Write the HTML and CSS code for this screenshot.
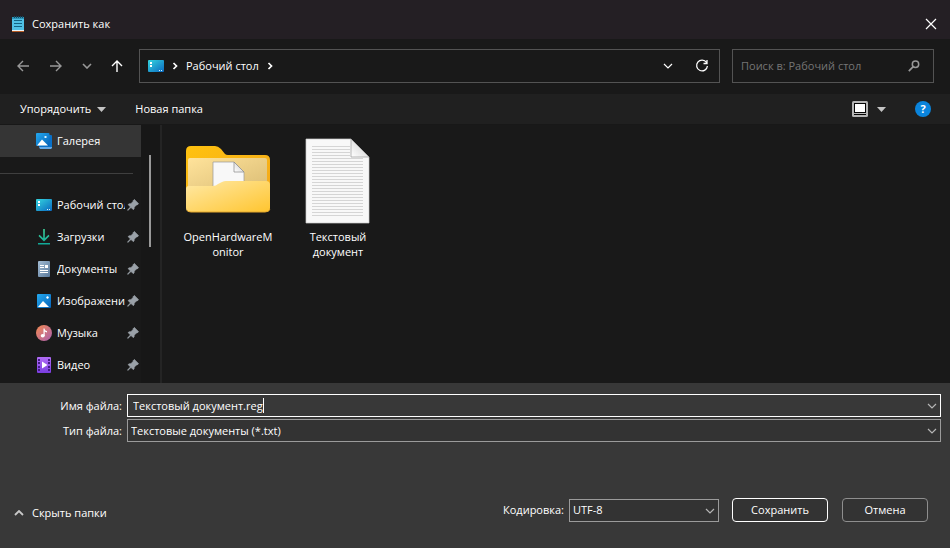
FILE: index.html
```html
<!DOCTYPE html>
<html lang="ru">
<head>
<meta charset="utf-8">
<meta name="viewport" content="width=device-width, initial-scale=1">
<title>Сохранить как</title>
<link rel="stylesheet" href="styles.css">
</head>
<body>
<svg class="defs" width="0" height="0" aria-hidden="true">
  <defs>
    <linearGradient id="teal" x1="0" y1="0" x2="1" y2="1"><stop offset="0" stop-color="#35d6df"/><stop offset="1" stop-color="#0b69c0"/></linearGradient>
    <linearGradient id="blue" x1="0" y1="0" x2="1" y2="1"><stop offset="0" stop-color="#24aaf0"/><stop offset="1" stop-color="#0662b8"/></linearGradient>
    <linearGradient id="green" x1="0" y1="0" x2="0" y2="1"><stop offset="0" stop-color="#3fd39a"/><stop offset="1" stop-color="#0fa697"/></linearGradient>
    <linearGradient id="slate" x1="0" y1="0" x2="1" y2="1"><stop offset="0" stop-color="#a4bdd4"/><stop offset="1" stop-color="#58789a"/></linearGradient>
    <linearGradient id="music" x1="0" y1="0" x2="1" y2="1"><stop offset="0" stop-color="#f48a50"/><stop offset="1" stop-color="#a95fb0"/></linearGradient>
    <linearGradient id="violet" x1="0" y1="0" x2="0" y2="1"><stop offset="0" stop-color="#b16cf5"/><stop offset="1" stop-color="#7a3de0"/></linearGradient>
    <linearGradient id="folder" x1="0" y1="0" x2="1" y2="1"><stop offset="0" stop-color="#ffe9a6"/><stop offset="1" stop-color="#ffc52f"/></linearGradient>
    <linearGradient id="inner" x1="0" y1="0" x2="1" y2="1"><stop offset="0" stop-color="#ffe39b"/><stop offset="1" stop-color="#d9bb73"/></linearGradient>
    <linearGradient id="back" x1="0" y1="0" x2="1" y2="1"><stop offset="0" stop-color="#ffc20f"/><stop offset="1" stop-color="#f2a61d"/></linearGradient>
    <linearGradient id="fold" x1="0" y1="1" x2="1" y2="0"><stop offset="0" stop-color="#fff"/><stop offset="1" stop-color="#c8c8c8"/></linearGradient>
    <symbol id="desktop" viewBox="0 0 16 16"><rect y="2" width="16" height="12" rx="1" fill="url(#teal)"/><path d="M2 4h2v2H2zM2 7h2v2H2z" fill="#fff"/><path d="M11 12h1v1h-1zM13 12h1v1h-1z" fill="#d7f2ff"/></symbol>
    <symbol id="pin" viewBox="0 0 12 12"><path d="M7.300.500 11.500 4.700 10 6 9.400 5.900 7.200 8.200 7 10 6.200 10.600 4 8.400.800 11.400.500 11.100 3.500 7.900 1.200 5.700 1.800 4.900 3.900 4.700 6.200 2.500 6.100 1.800Z" fill="#9aa1a8" stroke="#9aa1a8" stroke-width=".8"/></symbol>
    <symbol id="chevron" viewBox="0 0 10 6"><path d="m1 1 4 4 4-4" fill="none" stroke="currentColor" stroke-width="1.200"/></symbol>
    <symbol id="crumb" viewBox="0 0 6 8"><path d="m1.500 1 3 3-3 3" fill="none" stroke="currentColor" stroke-width="1.700"/></symbol>
  </defs>
</svg>
<div class="dialog">
  <header class="titlebar">
    <svg class="app-icon" width="12" height="16" viewBox="0 0 12 16" aria-hidden="true"><path d="M0 1h12v14H0z" fill="#50c0e5"/><path d="M0 1h12v2H0z" fill="#2b94b8"/><path d="M2 0h1v2H2zM4 0h1v2H4zM6 0h1v2H6zM8 0h1v2H8zM10 0h1v2h-1z" fill="#164e66"/><path d="M2 4.500h8M2 7.500h8M2 10.500h8" stroke="#126383"/><path d="M0 14h12v1H0z" fill="#ecf6fa"/><path d="M0 15h12v1H0z" fill="#b75b24"/></svg>
    <h1 class="title">Сохранить как</h1>
    <button class="icon-button close" aria-label="Закрыть"><svg width="12" height="12" viewBox="0 0 12 12"><path d="m1 1 10 10M11 1 1 11" stroke="currentColor" stroke-width="1.200"/></svg></button>
  </header>
  <nav class="navbar" aria-label="Навигация">
    <div class="history">
      <button class="icon-button dim" aria-label="Назад"><svg width="14" height="14" viewBox="0 0 14 14"><path d="M13 7H2M7 2 2 7l5 5" fill="none" stroke="currentColor" stroke-width="1.400"/></svg></button>
      <button class="icon-button dim" aria-label="Вперёд"><svg width="14" height="14" viewBox="0 0 14 14"><path d="M1 7h11M7 2l5 5-5 5" fill="none" stroke="currentColor" stroke-width="1.400"/></svg></button>
      <button class="icon-button dim" aria-label="Последние места"><svg width="10" height="6" viewBox="0 0 10 6"><path d="m1 1 4 4 4-4" fill="none" stroke="currentColor" stroke-width="1.600"/></svg></button>
      <button class="icon-button" aria-label="Вверх"><svg width="12" height="14" viewBox="0 0 12 14"><path d="M6 13V2M1 7l5-5 5 5" fill="none" stroke="currentColor" stroke-width="1.400"/></svg></button>
    </div>
    <div class="address">
      <svg width="16" height="16" aria-hidden="true"><use href="#desktop"/></svg>
      <svg width="6" height="8" aria-hidden="true"><use href="#crumb"/></svg>
      <a class="place" href="#">Рабочий стол</a>
      <svg width="6" height="8" aria-hidden="true"><use href="#crumb"/></svg>
      <button class="icon-button history-drop" aria-label="Предыдущие расположения"><svg width="10" height="6"><use href="#chevron"/></svg></button>
      <button class="icon-button refresh" aria-label="Обновить"><svg width="14" height="14" viewBox="0 0 14 14"><path d="M11.500 3.500A5.400 5.400 0 1 0 12.400 7M12 1v3.500H8.500" fill="none" stroke="currentColor" stroke-width="1.300"/></svg></button>
    </div>
    <div class="search">
      <input class="search-input" type="text" placeholder="Поиск в: Рабочий стол" aria-label="Поиск в: Рабочий стол">
      <svg width="12" height="12" viewBox="0 0 12 12" aria-hidden="true"><circle cx="7.500" cy="4.300" r="3.200" fill="none" stroke="#989898" stroke-width="1.500"/><path d="M5.200 6.700.800 11.200" stroke="#989898" stroke-width="1.700"/></svg>
    </div>
  </nav>
  <div class="toolbar">
    <button class="text-button">Упорядочить <svg width="9" height="5" viewBox="0 0 9 5" aria-hidden="true"><path d="M0 0h9L4.500 5Z" fill="#c4c4c4"/></svg></button>
    <button class="text-button">Новая папка</button>
    <button class="icon-button view" aria-label="Вид"><svg width="16" height="16" viewBox="0 0 16 16"><rect width="16" height="16" rx="1.500" fill="#b5b5b5"/><path d="M2 2h12v12H2z" fill="#050505"/><path d="M3 3h10v8H3z" fill="#fff"/><path d="M2 12h12v1H2z" fill="#bbb"/></svg><svg width="9" height="5" viewBox="0 0 9 5"><path d="M0 0h9L4.500 5Z" fill="#c4c4c4"/></svg></button>
    <button class="help" aria-label="Справка">?</button>
  </div>
  <main class="browser">
    <aside class="sidebar">
      <div class="tree">
        <a class="tree-item selected" href="#"><svg width="16" height="16" viewBox="0 0 16 16"><path d="M13 2h2a1 1 0 0 1 1 1v11H3v-1h10Z" fill="#0870c9"/><path d="M3 14h13v1l-1 1H4Z" fill="#64a9e6"/><rect width="13.500" height="13" rx="1" fill="url(#blue)"/><path d="M1 12.500 6 6.500l6 6Z" fill="#fff"/><path d="M8.500 3h2v2h-2z" fill="#d7f1ff"/></svg><span class="tree-name">Галерея</span></a>
        <hr class="divider">
        <a class="tree-item" href="#"><svg width="16" height="16"><use href="#desktop"/></svg><span class="tree-name">Рабочий стол</span><svg class="pin" width="12" height="12"><use href="#pin"/></svg></a>
        <a class="tree-item" href="#"><svg width="16" height="16" viewBox="0 0 16 16"><path d="M7.200 0h1.600v9.300l3.700-3.500 1 1.200L8 12.400 2.500 7l1-1.200 3.700 3.500ZM2 14h12v1.600H2Z" fill="url(#green)"/></svg><span class="tree-name">Загрузки</span><svg class="pin" width="12" height="12"><use href="#pin"/></svg></a>
        <a class="tree-item" href="#"><svg width="16" height="16" viewBox="0 0 16 16"><rect x="2" width="12" height="16" rx="1" fill="url(#slate)"/><path d="M4 4h4v1H4zM4 6h4v1H4zM4 9h8v1H4zM4 11h8v1H4zM9 4h3v3H9z" fill="#fff"/></svg><span class="tree-name">Документы</span><svg class="pin" width="12" height="12"><use href="#pin"/></svg></a>
        <a class="tree-item" href="#"><svg width="16" height="16" viewBox="0 0 16 16"><rect x="1" y="1" width="14" height="14" rx="1" fill="url(#blue)"/><path d="m2 14 5-6 6 6Z" fill="#fff"/><path d="m11.500 3 .5 1 1 .5-1 .5-.5 1-.5-1-1-.5 1-.5Z" fill="#fff" stroke="#d7f1ff" stroke-width=".5"/></svg><span class="tree-name">Изображения</span><svg class="pin" width="12" height="12"><use href="#pin"/></svg></a>
        <a class="tree-item" href="#"><svg width="16" height="16" viewBox="0 0 16 16"><circle cx="8" cy="8" r="8" fill="url(#music)"/><ellipse cx="6.700" cy="10.700" rx="2" ry="1.800" fill="#fff"/><path d="M7.500 11V3.500h1C8.700 5 9.500 5.700 11 6v1.400c-1 0-1.800-.3-2.300-.8V11" fill="#fff"/></svg><span class="tree-name">Музыка</span><svg class="pin" width="12" height="12"><use href="#pin"/></svg></a>
        <a class="tree-item" href="#"><svg width="16" height="16" viewBox="0 0 16 16"><rect x="1" width="14" height="16" rx="1" fill="url(#violet)"/><path d="M2 2h2v2H2zM2 5h2v2H2zM2 9h2v2H2zM2 12h2v2H2zM12 2h2v2h-2zM12 5h2v2h-2zM12 9h2v2h-2zM12 12h2v2h-2z" fill="#431c82"/><path d="m6 4.500 5.500 3.500L6 11.500Z" fill="#fff"/></svg><span class="tree-name">Видео</span><svg class="pin" width="12" height="12"><use href="#pin"/></svg></a>
      </div>
      <div class="scroll-track"><div class="scroll-thumb"></div></div>
    </aside>
    <section class="files" aria-label="Файлы">
      <a class="file" href="#"><svg width="88" height="88" viewBox="0 0 88 88" aria-hidden="true"><path d="M2 15q0-5 5-5h24q3 0 6 3l4 5q1 1 3 1h37q5 0 5 5v45H2Z" fill="url(#back)"/><path d="M4 24q0-2 2-2h75q2 0 2 2v33H4Z" fill="url(#inner)"/><path d="M29 26h21l10 10v24H29Z" fill="#f8f8f8" stroke="#999" stroke-width=".7"/><path d="M50 26v10h10Z" fill="url(#fold)" stroke="#888" stroke-width=".7"/><path d="M2 53q0-3 3-3h24q3 0 5-2l4-2q2-1 4-1h40q4 0 4 4v23q0 4-4 4H6q-4 0-4-4Z" fill="url(#folder)"/><path d="M3 74q1 2 4 2h74q4 0 5-3" fill="none" stroke="#e5a82c"/></svg><span class="file-name">OpenHardwareM<wbr>onitor</span></a>
      <a class="file" href="#"><svg width="88" height="88" viewBox="0 0 88 88" aria-hidden="true"><path d="M12 3h45l18 18v66H12Z" fill="#f8f8f8" stroke="#ccc" stroke-width=".7"/><path d="M18 10.500h38M18 13.500h38M18 16.500h38M18 19.500h38M18 22.500h51M18 25.500h51M18 28.500h51M18 31.500h51M18 34.500h51M18 37.500h51M18 40.500h51M18 43.500h51M18 46.500h51M18 49.500h51M18 52.500h51M18 55.500h51M18 58.500h51M18 61.500h51M18 64.500h51M18 67.500h51M18 70.500h51M18 73.500h51M18 76.500h51M18 79.500h51" stroke="#d5d5d5"/><path d="M57 3v18h18Z" fill="url(#fold)" stroke="#999" stroke-width=".7"/></svg><span class="file-name">Текстовый документ</span></a>
    </section>
  </main>
  <form class="panel">
    <div class="fields">
      <label class="label" for="name">Имя файла:</label>
      <div class="combo focused">
        <input class="name-input" id="name" type="text" value="Текстовый документ.reg"><span class="caret"></span>
        <button class="combo-arrow" type="button" aria-label="Показать имена"><svg width="10" height="6"><use href="#chevron"/></svg></button>
      </div>
      <label class="label" for="type">Тип файла:</label>
      <div class="combo">
        <select class="select" id="type"><option>Текстовые документы (*.txt)</option></select>
        <svg class="select-arrow" width="10" height="6" aria-hidden="true"><use href="#chevron"/></svg>
      </div>
    </div>
    <div class="actions">
      <button class="text-button hide" type="button"><svg width="10" height="6" viewBox="0 0 10 6" aria-hidden="true"><path d="m1 5 4-4 4 4" fill="none" stroke="#c8c8c8" stroke-width="1.800"/></svg>Скрыть папки</button>
      <label class="label" for="encoding">Кодировка:</label>
      <div class="combo encoding">
        <select class="select" id="encoding"><option>UTF-8</option></select>
        <svg class="select-arrow" width="10" height="6" aria-hidden="true"><use href="#chevron"/></svg>
      </div>
      <button class="button primary" type="button">Сохранить</button>
      <button class="button" type="button">Отмена</button>
    </div>
  </form>
</div>
</body>
</html>
```
FILE: styles.css
```css
* { box-sizing: border-box; }
body {
  margin: 0;
  background: #191919;
  color: #fff;
  font: 11px/16px "Open Sans", "Noto Sans", sans-serif;
}
svg { display: block; flex: none; }
.defs { position: absolute; }
button, input, select { font: inherit; color: inherit; margin: 0; }
a { color: inherit; text-decoration: none; }
.dialog { display: flex; flex-direction: column; min-height: 100vh; }

.icon-button, .text-button {
  display: flex;
  align-items: center;
  justify-content: center;
  padding: 0;
  border: 0;
  background: none;
}

.titlebar {
  display: flex;
  align-items: center;
  gap: 8px;
  padding: 8px 12px 0;
  height: 39px;
  background: #241f24;
}
.title { margin: 0; font-size: 11px; font-weight: 400; }
.close { margin-left: auto; width: 14px; height: 14px; }

.navbar {
  display: flex;
  align-items: center;
  gap: 12px;
  height: 55px;
  padding: 0 16px 2px;
}
.history { display: flex; align-items: center; gap: 19px; width: 111px; }
.history .icon-button { height: 24px; }
.dim { color: #989898; }
.address, .search {
  display: flex;
  align-items: center;
  height: 34px;
  border: 1px solid #535353;
}
.address { flex: 1; gap: 8px; padding: 0 8px; }
.history-drop { margin-left: auto; width: 24px; height: 24px; }
.refresh { width: 24px; height: 24px; margin-left: 2px; margin-right: -3px; }
.search { width: 202px; padding: 0 13px 0 8px; }
.search-input {
  flex: 1;
  min-width: 0;
  padding: 0;
  border: 0;
  outline: 0;
  background: none;
}
.search-input::placeholder { color: #757575; opacity: 1; }

.toolbar {
  display: flex;
  align-items: center;
  gap: 29px;
  height: 31px;
  padding: 0 19px 0 20px;
  background: #202020;
  border-bottom: 1px solid #181818;
}
.text-button { gap: 6px; }
.view { gap: 9px; margin-left: auto; }
.help {
  width: 16px;
  height: 16px;
  padding: 0;
  border: 0;
  border-radius: 50%;
  background: #0a84dc;
  font-weight: 700;
}

.browser { display: flex; flex: 1; min-height: 258px; }
.sidebar { display: flex; width: 162px; border-right: 2px solid #242424; }
.tree { width: 141px; }
.tree-item {
  display: flex;
  align-items: center;
  height: 32px;
  padding: 0 2px 0 36px;
}
.tree-item.selected { background: #353535; }
.tree-name {
  flex: 1;
  min-width: 0;
  margin-left: 5px;
  overflow: hidden;
  white-space: nowrap;
}
.pin { margin-left: 2px; }
.divider { height: 1px; margin: 16px 8px 15px 0; border: 0; background: #3f3f3f; }
.scroll-track { width: 19px; padding: 30px 8px 0; background: #171717; }
.scroll-thumb { width: 2px; height: 92px; background: #999; }

.files { display: flex; align-items: flex-start; flex: 1; gap: 10px; padding: 11px 16px; }
.file { display: flex; flex-direction: column; align-items: center; width: 100px; }
.file-name { margin-top: 5px; line-height: 15px; text-align: center; }

.panel { background: #383838; padding: 11px 9px 26px 0; }
.fields {
  display: grid;
  grid-template-columns: 122px 1fr;
  align-items: center;
  gap: 2px 5px;
}
.label { text-align: right; }
.combo {
  display: flex;
  align-items: center;
  height: 23px;
  border: 1px solid #9b9b9b;
  background: #333;
  position: relative;
}
.combo.focused { border-color: #fff; background: #383838; }
.name-input {
  field-sizing: content;
  padding: 0 0 0 5px;
  border: 0;
  outline: 0;
  background: none;
}
.caret { width: 1px; height: 15px; background: #fff; }
.combo-arrow {
  display: flex;
  align-items: center;
  margin-left: auto;
  padding: 0 3px;
  border: 0;
  background: none;
  color: #b5b5b5;
}
.select {
  flex: 1;
  height: 21px;
  padding: 0 16px 0 3px;
  border: 0;
  outline: 0;
  appearance: none;
  background: none;
}
.select-arrow { position: absolute; right: 3px; top: 8px; color: #b5b5b5; pointer-events: none; }
.actions { display: flex; align-items: center; margin-top: 56px; padding: 0 13px 0 14px; }
.hide { gap: 8px; margin-right: auto; padding-top: 5px; }
.encoding { width: 150px; margin: 0 13px 0 5px; }
.button {
  width: 86px;
  height: 24px;
  padding: 0;
  border: 1px solid #8e8e8e;
  border-radius: 4px;
  background: #333;
}
.primary { width: 96px; margin-right: 14px; border-color: #fff; }
```
